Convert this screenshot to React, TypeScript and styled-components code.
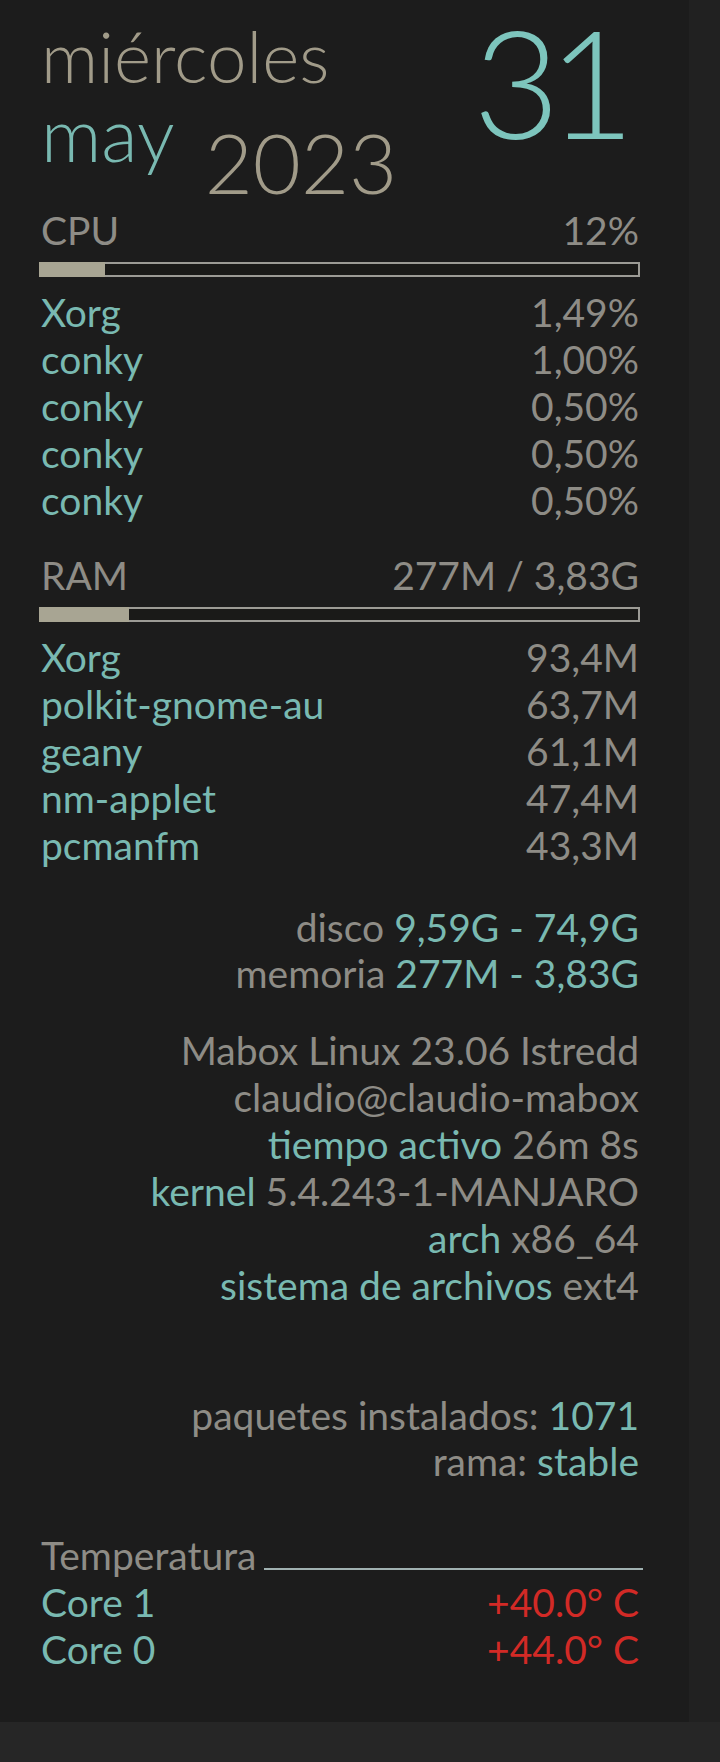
import React from "react";
import styled, { createGlobalStyle } from "styled-components";

const teal = "#79b9b1";
const grey = "#8e8c86";
const beige = "#a19b89";

type Proc = { name: string, value: string };

const cpuTop: Proc[] = [
	{ name: "Xorg", value: "1,49%" },
	{ name: "conky", value: "1,00%" },
	{ name: "conky", value: "0,50%" },
	{ name: "conky", value: "0,50%" },
	{ name: "conky", value: "0,50%" }
];

const memTop: Proc[] = [
	{ name: "Xorg", value: "93,4M" },
	{ name: "polkit-gnome-au", value: "63,7M" },
	{ name: "geany", value: "61,1M" },
	{ name: "nm-applet", value: "47,4M" },
	{ name: "pcmanfm", value: "43,3M" }
];

const GlobalStyle = createGlobalStyle`
	html, body {
		margin: 0;
		padding: 0;
		background: #262626;
	}
	body {
		font-family: "Lato", "Open Sans", sans-serif;
	}
`;

const Screen = styled.div`
	display: flex;
	height: 1722px;
	background: #212121;
`;

const Panel = styled.main`
	width: 689px;
	height: 100%;
	box-sizing: border-box;
	padding: 0 50px 0 41px;
	background: #1c1c1c;
	font-size: 39px;
	color: ${grey};
`;

const Header = styled.header`
	display: flex;
	justify-content: space-between;
	height: 207px;
	padding-top: 21px;
	box-sizing: border-box;
`;

const DateBlock = styled.div`
	display: flex;
	flex-direction: column;
`;

const Weekday = styled.div`
	font-size: 71px;
	font-weight: 300;
	line-height: 70px;
	color: ${beige};
`;

const MonthRow = styled.div`
	display: flex;
	align-items: flex-start;
	margin-top: 6px;
`;

const Month = styled.span`
	font-size: 75px;
	font-weight: 300;
	line-height: 72px;
	color: ${teal};
`;

const Year = styled.span`
	font-size: 83px;
	font-weight: 300;
	line-height: 90px;
	margin: 20px 0 0 30px;
	color: ${beige};
`;

const Day = styled.div`
	font-size: 150px;
	font-weight: 300;
	line-height: 120px;
	letter-spacing: -12px;
	margin: 0 16px 0 0;
	color: #7dc5bd;
`;

const Row = styled.div`
	display: flex;
	justify-content: space-between;
	line-height: 47px;
`;

const Name = styled.span`
	color: ${teal};
`;

const Bar = styled.div`
	height: 15px;
	margin: 8px -1px 12px -2px;
	box-sizing: border-box;
	border: 2px solid #9c9b95;
	background: #1a1a18;
`;

const Fill = styled.div`
	height: 15px;
	margin: -2px 0 0 -2px;
	background: #a8a593;
`;

const Spacer = styled.div<{ $h: number }>`
	height: ${p => p.$h}px;
`;

const Info = styled.div<{ $gap: number, $line?: number }>`
	margin-top: ${p => p.$gap}px;
	text-align: right;
	line-height: ${p => p.$line ?? 46}px;
`;

const Key = styled.span`
	color: ${teal};
`;

const TempHead = styled.div`
	display: flex;
	align-items: baseline;
	margin-top: 48px;
	line-height: 47px;
`;

const Rule = styled.div`
	flex: 1;
	height: 2px;
	margin: 0 -4px 6px 8px;
	background: #a0b1b1;
`;

const Hot = styled.span`
	color: #d22a26;
`;

const Meter = ({ label, value, percent }: { label: string, value: string, percent: number }) => (
	<>
		<Row>
			<span>{label}</span>
			<span>{value}</span>
		</Row>
		<Bar>
			<Fill style={{ width: `${percent}%` }} />
		</Bar>
	</>
);

const ProcList = ({ items }: { items: Proc[] }) => (
	<>
		{items.map((p, i) => (
			<Row key={i}>
				<Name>{p.name}</Name>
				<span>{p.value}</span>
			</Row>
		))}
	</>
);

const App = () => (
	<>
		<GlobalStyle />
		<Screen>
			<Panel>
				<Header>
					<DateBlock>
						<Weekday>miércoles</Weekday>
						<MonthRow>
							<Month>may</Month>
							<Year>2023</Year>
						</MonthRow>
					</DateBlock>
					<Day>31</Day>
				</Header>

				<Meter label="CPU" value="12%" percent={11} />
				<ProcList items={cpuTop} />

				<Spacer $h={28} />
				<Meter label="RAM" value="277M / 3,83G" percent={15} />
				<ProcList items={memTop} />

				<Info $gap={35}>
					<div>disco <Key>9,59G - 74,9G</Key></div>
					<div>memoria <Key>277M - 3,83G</Key></div>
				</Info>

				<Info $gap={31} $line={47}>
					<div>Mabox Linux 23.06 Istredd</div>
					<div>claudio@claudio-mabox</div>
					<div><Key>tiempo activo</Key> 26m 8s</div>
					<div><Key>kernel</Key> 5.4.243-1-MANJARO</div>
					<div><Key>arch</Key> x86_64</div>
					<div><Key>sistema de archivos</Key> ext4</div>
				</Info>

				<Info $gap={83}>
					<div>paquetes instalados: <Key>1071</Key></div>
					<div>rama: <Key>stable</Key></div>
				</Info>

				<TempHead>
					<span>Temperatura</span>
					<Rule />
				</TempHead>
				<Row>
					<Name>Core 1</Name>
					<Hot>+40.0° C</Hot>
				</Row>
				<Row>
					<Name>Core 0</Name>
					<Hot>+44.0° C</Hot>
				</Row>
			</Panel>
		</Screen>
	</>
);

export default App;
